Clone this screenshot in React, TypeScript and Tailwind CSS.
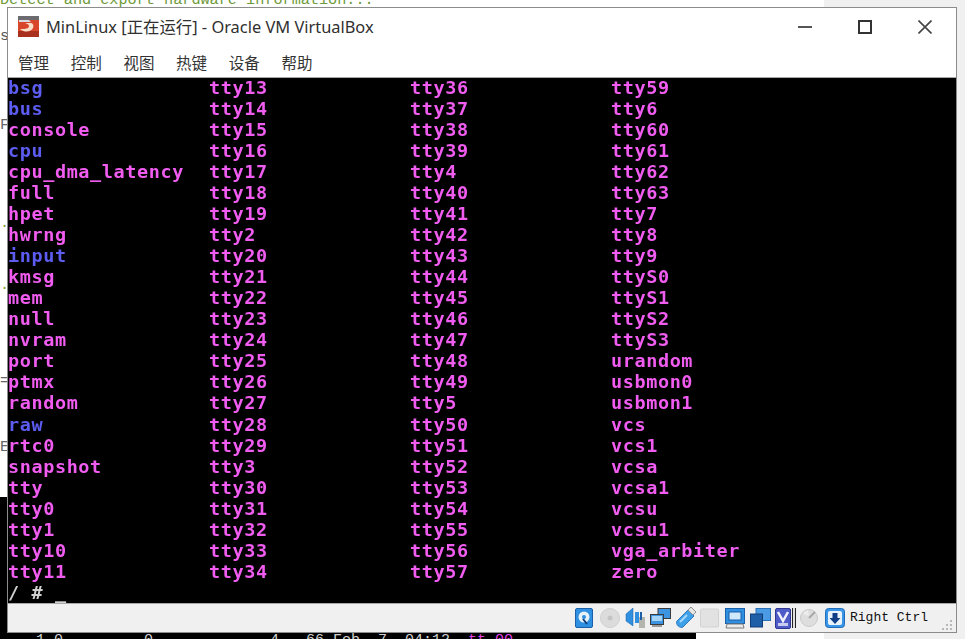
import React from 'react';

const col1: [string, boolean][] = [
  ['bsg', true], ['bus', true], ['console', false], ['cpu', true], ['cpu_dma_latency', false], ['full', false],
  ['hpet', false], ['hwrng', false], ['input', true], ['kmsg', false], ['mem', false], ['null', false],
  ['nvram', false], ['port', false], ['ptmx', false], ['random', false], ['raw', true], ['rtc0', false],
  ['snapshot', false], ['tty', false], ['tty0', false], ['tty1', false], ['tty10', false], ['tty11', false],
];
const col2 = ['tty13', 'tty14', 'tty15', 'tty16', 'tty17', 'tty18', 'tty19', 'tty2', 'tty20', 'tty21', 'tty22', 'tty23', 'tty24', 'tty25', 'tty26', 'tty27', 'tty28', 'tty29', 'tty3', 'tty30', 'tty31', 'tty32', 'tty33', 'tty34'];
const col3 = ['tty36', 'tty37', 'tty38', 'tty39', 'tty4', 'tty40', 'tty41', 'tty42', 'tty43', 'tty44', 'tty45', 'tty46', 'tty47', 'tty48', 'tty49', 'tty5', 'tty50', 'tty51', 'tty52', 'tty53', 'tty54', 'tty55', 'tty56', 'tty57'];
const col4 = ['tty59', 'tty6', 'tty60', 'tty61', 'tty62', 'tty63', 'tty7', 'tty8', 'tty9', 'ttyS0', 'ttyS1', 'ttyS2', 'ttyS3', 'urandom', 'usbmon0', 'usbmon1', 'vcs', 'vcs1', 'vcsa', 'vcsa1', 'vcsu', 'vcsu1', 'vga_arbiter', 'zero'];

const menus = ['管理', '控制', '视图', '热键', '设备', '帮助'];

const Column: React.FC<{ items: [string, boolean][] }> = ({ items }) => (
  <div className="w-[201px] shrink-0">
    {items.map(([name, isDir]) => (
      <div key={name} className={`h-[21.04px] leading-[19px] ${isDir ? 'text-[#5c5cf0]' : 'text-[#f05cf0]'}`}>{name}</div>
    ))}
  </div>
);

const plain = (list: string[]): [string, boolean][] => list.map(n => [n, false]);

const AppIcon = () => (
  <svg width="21" height="21" viewBox="0 0 21 21">
    <rect width="21" height="21" fill="#d8472a" />
    <rect y="15" width="21" height="6" fill="#a9301c" />
    <path d="M0 0h21v4h-21z" fill="#6b6b70" />
    <path d="M1 4h10l2 2h-12z" fill="#d9d9de" />
    <path d="M2 13c5 4 11 3 13-1 1-3 0-5-3-5h-5c4 1 5 3 3 5-2 1-5 1-8 1z" fill="#fbe0c8" />
  </svg>
);

const Hdd = () => (
  <svg width="18" height="20" viewBox="0 0 18 20">
    <rect x="0.5" y="0.5" width="17" height="19" rx="1.5" fill="#2f8fe0" stroke="#1a5fa8" />
    <circle cx="9" cy="9" r="5.5" fill="#e8f2fb" />
    <circle cx="9" cy="9" r="2" fill="#2f8fe0" />
    <path d="M8 11l4 5" stroke="#123e78" strokeWidth="2" />
  </svg>
);

const Cd = () => (
  <svg width="20" height="20" viewBox="0 0 20 20">
    <circle cx="10" cy="10" r="9.5" fill="#dcdcdc" stroke="#cfcfcf" />
    <circle cx="10" cy="10" r="2.5" fill="#c4c4c4" />
  </svg>
);

const Audio = () => (
  <svg width="20" height="20" viewBox="0 0 20 20">
    <path d="M1 6l7-6v18l-7-5z" fill="#2f8fe0" stroke="#1a5fa8" strokeWidth="0.5" />
    <rect x="10" y="4" width="4" height="11" fill="#2f8fe0" />
    <rect x="14" y="9" width="6" height="11" fill="#b5b5b0" />
    <rect x="15" y="4" width="2" height="8" fill="#1a5fa8" />
  </svg>
);

const Network = () => (
  <svg width="21" height="20" viewBox="0 0 21 20">
    <rect x="8" y="0.5" width="12.5" height="10" fill="#3d94e0" stroke="#3a3a3a" />
    <rect x="0.5" y="6.5" width="13" height="10" fill="#3d94e0" stroke="#3a3a3a" />
    <rect x="2" y="8" width="10" height="5" fill="#a5d4f8" />
    <rect x="2" y="17" width="10" height="2" fill="#9a9a9a" />
  </svg>
);

const Usb = () => (
  <svg width="21" height="22" viewBox="0 0 21 22">
    <path d="M2 14L13 3l6 6L8 20c-3 2-8-3-6-6z" fill="#3fa0ea" stroke="#2a78c0" />
    <path d="M13 3l3-3 5 5-3 3z" fill="#e5e5e5" stroke="#8f8f8f" />
    <path d="M5 15l7-7" stroke="#a8d8fa" strokeWidth="2" />
  </svg>
);

const Folder = () => (
  <svg width="19" height="20" viewBox="0 0 19 20">
    <rect x="0.5" y="1" width="18" height="18" rx="1" fill="#e2e2e2" stroke="#d2d2d2" />
  </svg>
);

const Display = () => (
  <svg width="20" height="21" viewBox="0 0 20 21">
    <rect x="0.5" y="0.5" width="19" height="15" fill="#2f8fe0" stroke="#1a5fa8" />
    <rect x="4" y="4" width="12" height="8" fill="#cfe8fb" stroke="#1a5fa8" />
    <path d="M2 16h16l1 4H1z" fill="#ececec" stroke="#7a7a7a" />
  </svg>
);

const Multi = () => (
  <svg width="21" height="20" viewBox="0 0 21 20">
    <rect x="6" y="0.5" width="14.5" height="12" fill="#4a9be4" stroke="#2c70b8" />
    <rect x="0.5" y="6" width="12" height="13" fill="#1f5fa8" stroke="#123e78" />
  </svg>
);

const Vt = () => (
  <svg width="16" height="21" viewBox="0 0 16 21">
    <rect x="0.5" y="0.5" width="15" height="20" rx="1.5" fill="#4f5cc8" stroke="#2f3790" />
    <path d="M3 4l5 9 5-9" fill="none" stroke="#f2f2ff" strokeWidth="2.5" />
    <rect x="3" y="15" width="10" height="3" fill="#c8ccf0" />
  </svg>
);

const Mouse = () => (
  <svg width="18" height="20" viewBox="0 0 18 20">
    <circle cx="9" cy="10" r="8.5" fill="#dedede" stroke="#c8c8c8" />
    <path d="M9 10l6-6" stroke="#a8a8a8" strokeWidth="2" />
    <path d="M3 6a8 8 0 0 1 5-4l1 6z" fill="#ececec" />
  </svg>
);

const HostKey = () => (
  <svg width="20" height="20" viewBox="0 0 20 20">
    <rect x="0.5" y="0.5" width="19" height="19" rx="3" fill="#3a95e6" stroke="#1f6cb8" />
    <rect x="3" y="3" width="14" height="14" rx="2" fill="#e8f3fc" />
    <path d="M7.5 5h5v5h3L10 16 4.5 10h3z" fill="#103f88" />
  </svg>
);

const Grip = () => (
  <svg width="11" height="11" viewBox="0 0 11 11" fill="#b8b8b8">
    <rect x="8" y="0" width="2" height="2" />
    <rect x="4" y="4" width="2" height="2" />
    <rect x="8" y="4" width="2" height="2" />
    <rect x="0" y="8" width="2" height="2" />
    <rect x="4" y="8" width="2" height="2" />
    <rect x="8" y="8" width="2" height="2" />
  </svg>
);

const Slot: React.FC<{ children: React.ReactNode }> = ({ children }) => (
  <div className="w-[25px] shrink-0 flex items-center">{children}</div>
);

const App: React.FC = () => {
  return (
    <div className="relative w-[965px] h-[639px] overflow-hidden bg-[#f0f0f0]">
      {/* desktop behind the window */}
      <div className="w-[824px] h-full bg-white flex flex-col">
        <div className="h-[497px] overflow-hidden font-['Liberation_Mono',monospace] text-[15.2px] leading-[16px] text-[#6f9a3a]">
          <div className="-mt-[8px]">Detect and export hardware information...</div>
          <div className="mt-[20px] text-[#555555]">s</div>
          <div className="mt-[73px] text-[#666666]">F</div>
          <div className="mt-[82px] text-[#8aa040]">.</div>
          <div className="mt-[46px] text-[#8aa040]">.</div>
          <div className="mt-[80px] text-[#666666]">=</div>
          <div className="mt-[50px] text-[#666666]">E</div>
        </div>
        <div className="w-[696px] flex-1 bg-black flex flex-col justify-end">
          <div className="h-[6px] overflow-hidden">
            <div className="flex font-['Liberation_Mono',monospace] text-[15px] leading-[16px] text-[#d0d0d0] whitespace-pre">
              <span>    1 0         0             4   66 Feb  7  04:12  </span>
              <span className="text-[#e040e0]">tt 00</span>
            </div>
          </div>
        </div>
      </div>

      {/* VirtualBox window */}
      <div className="absolute left-[7px] top-[7px] w-[950px] h-[626px] bg-white border border-[#8c8c8c] flex flex-col">
        <div className="h-[37px] shrink-0 flex items-center pl-[10px] font-['Noto_Sans','Noto_Sans_CJK_SC',sans-serif] text-[16.4px] text-[#303030]">
          <AppIcon />
          <span className="ml-[7px] pt-[1px] whitespace-nowrap">MinLinux [正在运行] - Oracle VM VirtualBox</span>
          <div className="ml-auto flex items-center pr-[24px] gap-[46px]">
            <div className="w-[14px] h-[2px] bg-[#555555]" />
            <div className="w-[14px] h-[14px] border-2 border-[#333333]" />
            <svg width="14" height="14" viewBox="0 0 14 14" stroke="#444444" strokeWidth="1.6">
              <path d="M0.5 0.5l13 13M13.5 0.5l-13 13" />
            </svg>
          </div>
        </div>
        <div className="h-[33px] shrink-0 flex items-center pl-[10px] gap-[21.7px] pt-[4px] border-b border-[#a8a8a8] font-['Noto_Sans_CJK_SC',sans-serif] text-[15.5px] text-[#333333]">
          {menus.map(m => <span key={m}>{m}</span>)}
        </div>
        <div className="flex-1 bg-black font-['DejaVu_Sans_Mono',monospace] font-bold text-[18.5px] tracking-[0.59px] whitespace-nowrap overflow-hidden blur-[0.4px]">
          <div className="flex">
            <Column items={col1} />
            <Column items={plain(col2)} />
            <Column items={plain(col3)} />
            <Column items={plain(col4)} />
          </div>
          <div className="h-[21px] leading-[19px] text-[#d0d0d0] whitespace-pre">/ # _</div>
        </div>
        <div className="h-[29px] shrink-0 bg-[#f0f0f0] border-t border-[#a8a8a8] flex items-center pl-[567px] pr-[3px]">
          <div className="flex items-center blur-[0.3px]">
            <Slot><Hdd /></Slot>
            <Slot><Cd /></Slot>
            <Slot><Audio /></Slot>
            <Slot><Network /></Slot>
            <Slot><Usb /></Slot>
            <Slot><Folder /></Slot>
            <Slot><Display /></Slot>
            <Slot><Multi /></Slot>
            <Slot>
              <Vt />
              <div className="ml-[1px] w-[4px] h-[20px] bg-[#e0e0e0] border-x border-[#222222]" />
            </Slot>
            <Slot><Mouse /></Slot>
            <Slot><HostKey /></Slot>
          </div>
          <span className="font-['Liberation_Mono',monospace] text-[13px] text-[#111111] whitespace-nowrap">Right Ctrl</span>
          <div className="ml-auto self-end mb-[1px]"><Grip /></div>
        </div>
      </div>
    </div>
  );
};

export default App;
